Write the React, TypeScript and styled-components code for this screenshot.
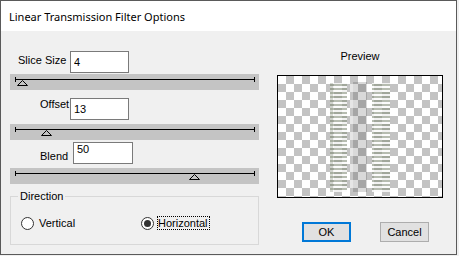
import React from 'react';
import styled, { createGlobalStyle } from 'styled-components';

const GlobalStyle = createGlobalStyle`
  html, body {
    margin: 0;
    padding: 0;
    background: #f0f0f0;
  }

  * {
    box-sizing: border-box;
  }
`;

const UI_FONT = `'Liberation Sans', Arial, sans-serif`;

interface SliderSpec {
  label: string;
  value: string;
  ratio: number;
  indent: number;
  labelWidth: number;
  labelTop: number;
  boxWidth: number;
  lift: number;
  rowGap: number;
  sliderGap: number;
}

const SLIDERS: SliderSpec[] = [
  { label: 'Slice Size', value: '4', ratio: 0.031, indent: 8, labelWidth: 52, labelTop: 3, boxWidth: 59, lift: 0, rowGap: 0, sliderGap: 1 },
  { label: 'Offset', value: '13', ratio: 0.128, indent: 30, labelWidth: 30, labelTop: 0, boxWidth: 59, lift: 0, rowGap: 8, sliderGap: 4 },
  { label: 'Blend', value: '50', ratio: 0.751, indent: 30, labelWidth: 33, labelTop: 8, boxWidth: 60, lift: 8, rowGap: 2, sliderGap: 4 }
];

const RAIL_LEFT = 5;
const RAIL_WIDTH = 239;

const Window = styled.div`
  width: 457px;
  height: 255px;
  border: 1px solid #5a5a5a;
  background: #f0f0f0;
  display: flex;
  flex-direction: column;
  font-family: ${UI_FONT};
  font-size: 11px;
  color: #000;
`;

const TitleBar = styled.div`
  height: 30px;
  flex: none;
  background: #fff;
  padding-left: 8px;
  font-family: 'Noto Sans', 'Open Sans', sans-serif;
  font-size: 11px;
  line-height: 31px;
  color: #000;
`;

const Content = styled.div`
  flex: 1;
  display: flex;
  padding-left: 9px;
`;

const LeftPane = styled.div`
  width: 249px;
  display: flex;
  flex-direction: column;
  padding-top: 20px;
`;

const FieldRow = styled.div<{ $indent: number; $gap: number }>`
  display: flex;
  align-items: flex-start;
  height: 22px;
  padding-left: ${(p) => p.$indent}px;
  margin-top: ${(p) => p.$gap}px;
`;

const FieldLabel = styled.label<{ $width: number; $top: number }>`
  width: ${(p) => p.$width}px;
  margin-top: ${(p) => p.$top}px;
  line-height: 13px;
  white-space: nowrap;
`;

const ValueBox = styled.input<{ $width: number; $lift: number }>`
  width: ${(p) => p.$width}px;
  height: 22px;
  margin: 0;
  border: 1px solid #7a7a7a;
  background: #fff;
  padding: 0 0 ${(p) => p.$lift}px 3px;
  font-family: ${UI_FONT};
  font-size: 11px;
  line-height: 13px;
  color: #000;
  outline: none;
`;

const SliderTrack = styled.div<{ $gap: number }>`
  position: relative;
  height: 16px;
  margin-top: ${(p) => p.$gap}px;
  background: #c4c4c4;
`;

const Rail = styled.div`
  position: absolute;
  left: ${RAIL_LEFT}px;
  top: 5px;
  width: ${RAIL_WIDTH + 1}px;
  height: 1px;
  background: #000;

  &::before,
  &::after {
    content: '';
    position: absolute;
    top: -2px;
    width: 1px;
    height: 5px;
    background: #000;
  }

  &::before {
    left: 0;
  }

  &::after {
    right: 0;
  }
`;

const Thumb = styled.svg`
  position: absolute;
  top: 6px;
  width: 11px;
  height: 7px;
  overflow: visible;
`;

const GroupBox = styled.div`
  position: relative;
  margin-top: 12px;
  height: 49px;
  border: 1px solid #d8d8d8;
`;

const GroupTitle = styled.span`
  position: absolute;
  top: -7px;
  left: 7px;
  padding: 0 2px;
  background: #f0f0f0;
  line-height: 13px;
`;

const RadioRow = styled.div`
  display: grid;
  grid-template-columns: 120px auto;
  padding: 19px 0 0 10px;
`;

const RadioOption = styled.div`
  display: flex;
  align-items: center;
  gap: 3px;
`;

const RadioCircle = styled.span<{ $checked: boolean }>`
  position: relative;
  width: 13px;
  height: 13px;
  border-radius: 50%;
  border: 1px solid #333;
  background: #fff;

  &::after {
    content: '';
    display: ${(p) => (p.$checked ? 'block' : 'none')};
    position: absolute;
    left: 2px;
    top: 2px;
    width: 7px;
    height: 7px;
    border-radius: 50%;
    background: #333;
  }
`;

const RadioText = styled.span<{ $focused: boolean }>`
  line-height: 12px;
  padding: 0 1px 0 ${(p) => (p.$focused ? 0 : 1)}px;
  border: 1px dotted ${(p) => (p.$focused ? '#000' : 'transparent')};
`;

const RightPane = styled.div`
  width: 166px;
  margin-left: 18px;
  display: flex;
  flex-direction: column;
  align-items: center;
`;

const PreviewLabel = styled.div`
  margin-top: 19px;
  line-height: 13px;
`;

const PreviewFrame = styled.div`
  margin-top: 12px;
  width: 166px;
  height: 123px;
  border: 1px solid #000;
  background: #fff;

  svg {
    display: block;
  }
`;

const ButtonRow = styled.div`
  align-self: stretch;
  display: flex;
  gap: 29px;
  margin-top: 24px;
  padding-left: 25px;
`;

const DialogButton = styled.button<{ $primary?: boolean }>`
  width: 49px;
  height: 20px;
  margin: 0;
  padding: 0;
  background: #e1e1e1;
  border: ${(p) => (p.$primary ? '2px solid #0078d7' : '1px solid #adadad')};
  font-family: ${UI_FONT};
  font-size: 11px;
  color: #000;
`;

function PreviewImage () {
  return (
    <svg width={164} height={121} viewBox='0 0 164 121'>
      <defs>
        <pattern id='checker' width={16} height={16} patternUnits='userSpaceOnUse'>
          <rect width={16} height={16} fill='#fff' />
          <rect x={8} width={8} height={8} fill='#c3c3c3' />
          <rect y={8} width={8} height={8} fill='#c3c3c3' />
        </pattern>
        <pattern id='slices' width={18} height={4} patternUnits='userSpaceOnUse'>
          <rect width={18} height={2} fill='#8f9886' opacity={0.65} />
          <rect y={2} width={18} height={2} fill='#fafafa' opacity={0.85} />
        </pattern>
      </defs>
      <rect width={164} height={121} fill='url(#checker)' />
      <rect x={52} y={7} width={17} height={109} fill='url(#slices)' />
      <rect x={52} y={7} width={3} height={109} fill='#8f9886' opacity={0.35} />
      <rect x={72} y={6} width={17} height={110} fill='#000' opacity={0.15} />
      <rect x={72} y={6} width={3} height={110} fill='#fff' opacity={0.35} />
      <rect x={94} y={7} width={18} height={109} fill='url(#slices)' />
    </svg>
  );
}

function Slider ({ gap, ratio }: { gap: number; ratio: number }) {
  const left = RAIL_LEFT + ratio * RAIL_WIDTH - 5;

  return (
    <SliderTrack $gap={gap}>
      <Rail />
      <Thumb
        style={{ left }}
        viewBox='0 0 11 7'
      >
        <polygon
          fill='#c4c4c4'
          points='5.5,0.5 10.5,5.5 0.5,5.5'
          stroke='#000'
          strokeWidth={1}
        />
      </Thumb>
    </SliderTrack>
  );
}

export default function App () {
  return (
    <>
      <GlobalStyle />
      <Window>
        <TitleBar>Linear Transmission Filter Options</TitleBar>
        <Content>
          <LeftPane>
            {SLIDERS.map((s) => (
              <React.Fragment key={s.label}>
                <FieldRow
                  $gap={s.rowGap}
                  $indent={s.indent}
                >
                  <FieldLabel
                    $top={s.labelTop}
                    $width={s.labelWidth}
                  >{s.label}</FieldLabel>
                  <ValueBox
                    $lift={s.lift}
                    $width={s.boxWidth}
                    defaultValue={s.value}
                    readOnly
                  />
                </FieldRow>
                <Slider
                  gap={s.sliderGap}
                  ratio={s.ratio}
                />
              </React.Fragment>
            ))}
            <GroupBox>
              <GroupTitle>Direction</GroupTitle>
              <RadioRow>
                <RadioOption>
                  <RadioCircle $checked={false} />
                  <RadioText $focused={false}>Vertical</RadioText>
                </RadioOption>
                <RadioOption>
                  <RadioCircle $checked />
                  <RadioText $focused>Horizontal</RadioText>
                </RadioOption>
              </RadioRow>
            </GroupBox>
          </LeftPane>
          <RightPane>
            <PreviewLabel>Preview</PreviewLabel>
            <PreviewFrame>
              <PreviewImage />
            </PreviewFrame>
            <ButtonRow>
              <DialogButton $primary>OK</DialogButton>
              <DialogButton>Cancel</DialogButton>
            </ButtonRow>
          </RightPane>
        </Content>
      </Window>
    </>
  );
}
